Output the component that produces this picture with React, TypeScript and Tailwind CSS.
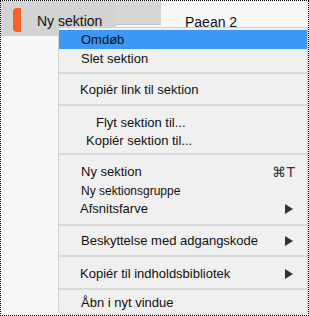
const font = { fontFamily: '"Liberation Sans", Arial, sans-serif' };

function Arrow() {
  return (
    <svg width="8" height="10" viewBox="0 0 8 10" className="absolute right-[14px] top-1/2 -translate-y-1/2">
      <path d="M0 0 L8 5 L0 10 Z" fill="#333" />
    </svg>
  );
}

function Sep({ h }: { h: string }) {
  return (
    <div className={`${h} flex items-center`}>
      <div className="h-[2px] w-full bg-[#dadada]" />
    </div>
  );
}

export default function App() {
  return (
    <div
      className="relative w-[309px] h-[316px] border border-dotted border-black bg-[#f8f8f8] text-[#111] overflow-hidden"
      style={font}
    >
      <div className="flex items-start">
        <div className="w-[115px] h-[35px] bg-[#d3d3d3] flex items-start">
          <div className="ml-[12px] mt-[7px] w-[8px] h-[24px] bg-[#f4622a] rounded-l-[4px]" />
          <span className="ml-[16px] mt-[12px] text-[14px] leading-[16px]">Ny sektion</span>
        </div>
        <div className="w-[45px] h-[24px] bg-[#d6d6d6] border-b border-[#c4c4c4]" />
        <span className="ml-[24px] mt-[13px] text-[14px] leading-[16px]">Paean 2</span>
      </div>

      <div className="absolute left-[57px] top-[26px] w-[250px] h-[288px] bg-[#f0f0f0] border border-[#d2d2d2] rounded-b-[6px] text-[13px] pt-[2px]">
        <div className="h-[19px] bg-[#3d97f4] flex items-center pl-[22px]">Omdøb</div>
        <div className="h-[19px] flex items-center pl-[22px]">Slet sektion</div>
        <Sep h="h-[10px]" />
        <div className="h-[24px] flex items-center pl-[21px]">Kopiér link til sektion</div>
        <Sep h="h-[6px]" />
        <div className="h-[6px]" />
        <div className="h-[18px] flex items-center pl-[37px]">Flyt sektion til...</div>
        <div className="h-[18px] flex items-center pl-[27px]">Kopiér sektion til...</div>
        <Sep h="h-[8px]" />
        <div className="h-[5px]" />
        <div className="relative h-[18px] flex items-center pl-[22px]">
          Ny sektion
          <span className="absolute right-[12px] text-[14px] text-[#333]">⌘T</span>
        </div>
        <div className="h-[19px] flex items-center pl-[22px] text-[12px]">Ny sektionsgruppe</div>
        <div className="relative h-[18px] flex items-center pl-[21px]">
          Afsnitsfarve
          <Arrow />
        </div>
        <Sep h="h-[14px]" />
        <div className="relative h-[18px] flex items-center pl-[22px]">
          Beskyttelse med adgangskode
          <Arrow />
        </div>
        <Sep h="h-[12px]" />
        <div className="relative h-[24px] flex items-center pl-[21px]">
          Kopiér til indholdsbibliotek
          <Arrow />
        </div>
        <Sep h="h-[6px]" />
        <div className="h-[22px] flex items-center pl-[22px]">Åbn i nyt vindue</div>
      </div>
    </div>
  );
}
